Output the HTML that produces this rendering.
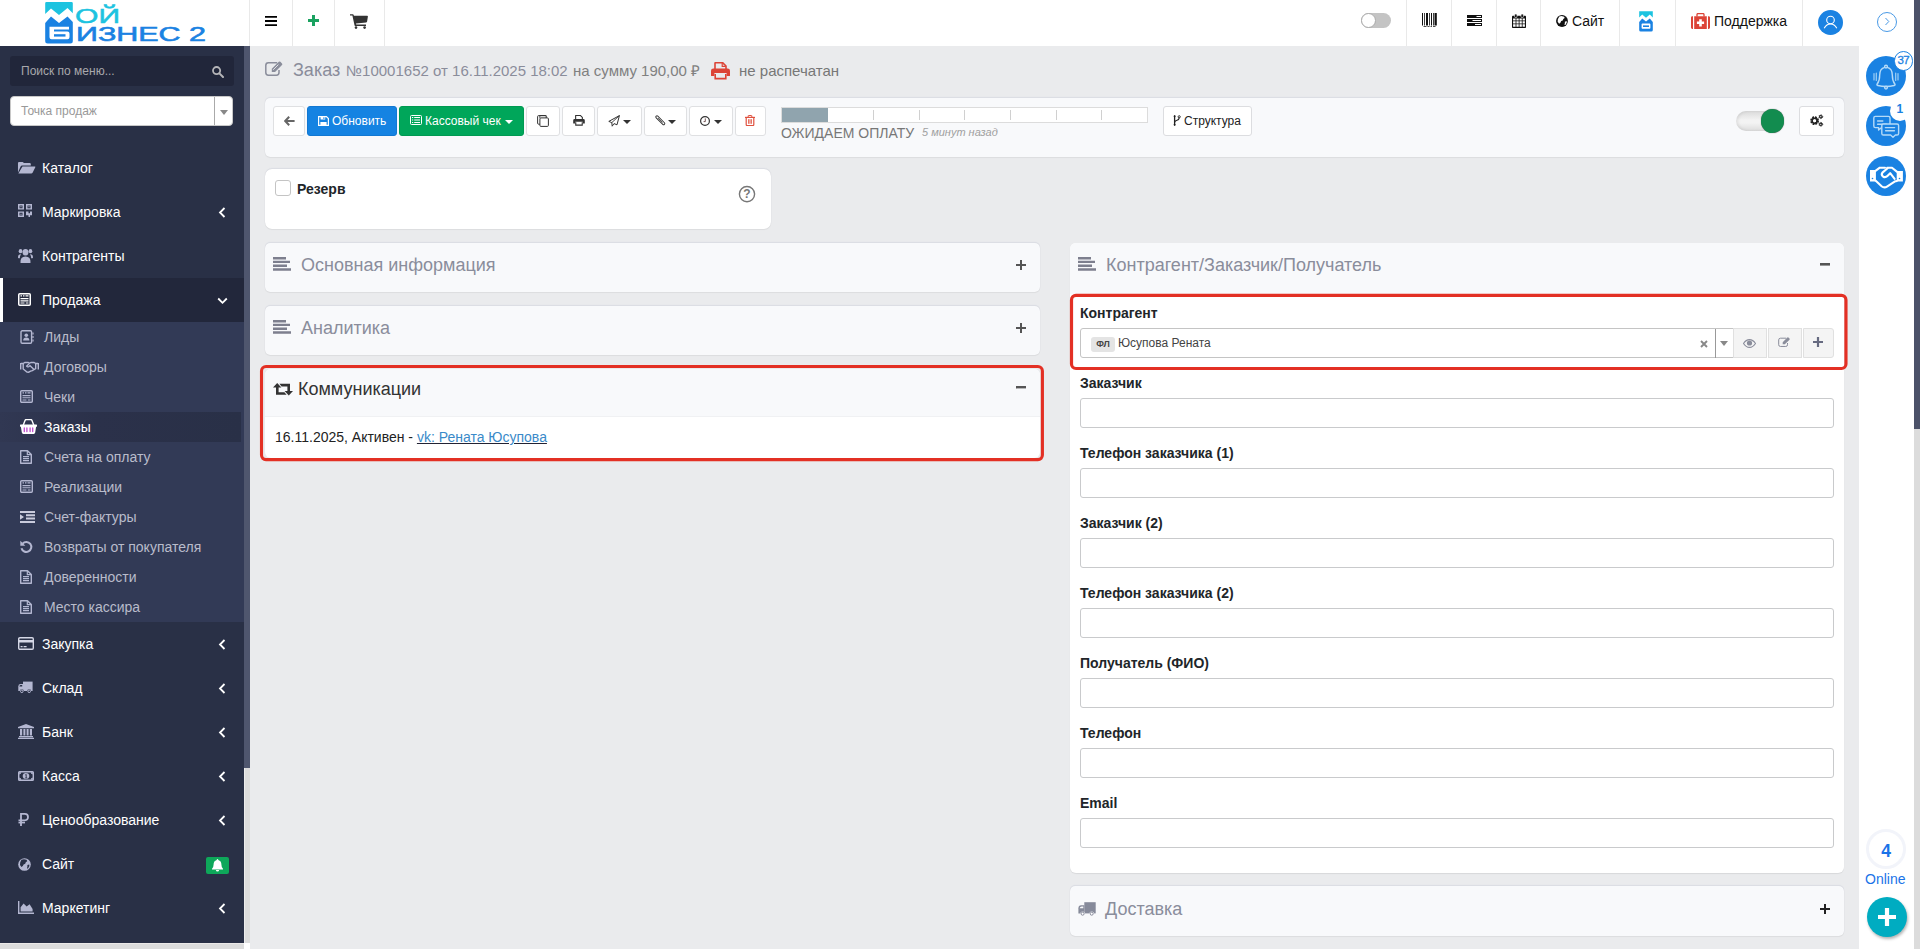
<!DOCTYPE html>
<html lang="ru">
<head>
<meta charset="utf-8">
<title>Заказ №10001652</title>
<style>
*{box-sizing:border-box;margin:0;padding:0}
html,body{width:1920px;height:949px;overflow:hidden}
body{font-family:"Liberation Sans",Arial,sans-serif;font-size:14px;color:#212529;background:#eaebed;position:relative}
.abs{position:absolute}
svg{display:block}
/* ---------- top bar ---------- */
#topbar{position:absolute;left:0;top:0;width:1859px;height:46px;background:#fff}
#topbar .cell{position:absolute;top:0;height:46px;border-left:1px solid #e9e9e9}
#topbar .txt{position:absolute;top:0;line-height:42px;font-size:14px;color:#111;white-space:nowrap}
/* ---------- sidebar ---------- */
#sidebar{position:absolute;left:0;top:46px;width:244px;height:897px;background:#293046;overflow:hidden}
#sbscroll{position:absolute;left:244px;top:46px;width:6px;height:897px;background:#dcdcdc;border-left:1px solid #ececec}
#sbscroll i{position:absolute;left:-1px;top:0;width:6px;height:722px;background:#4f566e}
#hscroll{position:absolute;left:0;top:943px;width:244px;height:6px;background:#dcdcdc;border-top:1px solid #ebe9e8}
#hcorner{position:absolute;left:244px;top:943px;width:6px;height:6px;background:#fff}
.mi{position:absolute;left:0;width:244px;height:44px;color:#fff;font-size:14px;line-height:44px}
.mi span{position:absolute;left:42px;top:0;white-space:nowrap}
.mi svg.ic{position:absolute;left:18px;top:14px}
.mi svg.ch{position:absolute;left:218px;top:17px}
.si{position:absolute;left:0;width:244px;height:30px;color:#b9bccb;font-size:14px;line-height:30px}
.si span{position:absolute;left:44px;top:0;white-space:nowrap}
.si svg{position:absolute;left:20px;top:8px}
/* ---------- cards ---------- */
.card{position:absolute;background:#f8f9fb;border-radius:5px;box-shadow:0 -1px 1px rgba(90,100,150,.09),0 0 1px rgba(0,0,0,.10),0 1px 1px rgba(0,0,0,.05)}
.ptitle{position:absolute;font-size:18px;color:#8a8d9b;white-space:nowrap;line-height:22px}
.btn{position:absolute;top:107px;height:29px;border:1px solid #dcdde0;background:#fff;border-radius:3px}
.lbl{position:absolute;left:1080px;font-weight:bold;font-size:14px;color:#212529;line-height:16px;white-space:nowrap}
.inp{position:absolute;left:1080px;width:754px;height:30px;border:1px solid #c9cacc;border-radius:3px;background:#fff}
/* ---------- right bar ---------- */
#rbar{position:absolute;left:1859px;top:0;width:55px;height:949px;background:#fff}
#vscroll{position:absolute;left:1914px;top:0;width:6px;height:949px;background:#dcdcdc}
#vscroll i{position:absolute;left:0;top:0;width:6px;height:429px;background:#4c5269}
.circ{position:absolute;border-radius:50%;background:#1a82e2}
</style>
</head>
<body>

<!-- ================= TOP BAR ================= -->
<div id="topbar">
<!-- logo -->
<svg class="abs" style="left:40px;top:0" width="175" height="46" viewBox="40 0 175 46">
<path d="M46.500 2H71.500Q72.800 2 72.800 3.300V13.200L67.500 8L59 15L51 8.500L45.200 14V3.300Q45.200 2 46.500 2Z" fill="#1cc3e0"/>
<path d="M45.200 23L51 16.500L59 23L67.500 16.500L72.800 22V41Q72.800 43.500 70.300 43.500H47.700Q45.200 43.500 45.200 41Z" fill="#1a82e2"/>
<path d="M49.500 26.800H69V29.400H54V31.600H67.500Q69.500 31.600 69.500 33.600V37.200Q69.500 39.200 67.500 39.200H51.500Q49.500 39.200 49.500 37.200Z" fill="#fff"/>
<path d="M54 34.200H65.500V36.600H54Z" fill="#1a82e2"/>
<text x="75" y="23" font-family="Liberation Sans,Arial,sans-serif" font-size="21" fill="#1cc3e0" stroke="#1cc3e0" stroke-width=".5" textLength="45" lengthAdjust="spacingAndGlyphs">ОЙ</text>
<text x="76" y="40.500" font-family="Liberation Sans,Arial,sans-serif" font-size="20" fill="#1a82e2" stroke="#1a82e2" stroke-width=".6" textLength="130" lengthAdjust="spacingAndGlyphs">ИЗНЕС 2</text>
</svg>

<div class="cell" style="left:249px;width:43px"></div>
<div class="cell" style="left:292px;width:42px"></div>
<div class="cell" style="left:334px;width:50px"></div>
<div class="cell" style="left:384px;width:1px"></div>
<!-- hamburger -->
<svg class="abs" style="left:265px;top:16px" width="12" height="10" viewBox="0 0 12 10"><path d="M0 0h12v1.800H0zM0 4.100h12v1.800H0zM0 8.200h12V10H0z" fill="#000"/></svg>
<!-- plus -->
<svg class="abs" style="left:308px;top:15px" width="11" height="11" viewBox="0 0 11 11"><path d="M4 0h3v4h4v3H7v4H4V7H0V4h4z" fill="#1aa260"/></svg>
<!-- cart -->
<svg class="abs" style="left:350px;top:14px" width="18" height="15" viewBox="0 0 18 15" fill="#333"><path d="M0 .2h2.800q.7 0 .9.800l.2.800H17.200q.8 0 .7.800l-.8 5q-.1.700-.9.800L6 9.600l.2 1H16v1.300H5.200q-.6 0-.7-.6L2.400 1.500H0Z"/><circle cx="6" cy="13.600" r="1.300"/><circle cx="14.600" cy="13.600" r="1.300"/></svg>

<!-- toggle off -->
<div class="abs" style="left:1361px;top:13px;width:30px;height:15px;border-radius:8px;background:#c4c4c4"></div>
<div class="abs" style="left:1361px;top:13px;width:15px;height:15px;border-radius:50%;background:#fff;border:1px solid #aaa"></div>

<div class="cell" style="left:1406px;width:45px"></div>
<div class="cell" style="left:1451px;width:45px"></div>
<div class="cell" style="left:1496px;width:44px"></div>
<div class="cell" style="left:1540px;width:79px"></div>
<div class="cell" style="left:1619px;width:56px"></div>
<div class="cell" style="left:1675px;width:127px"></div>
<div class="cell" style="left:1802px;width:56px"></div>

<!-- barcode -->
<svg class="abs" style="left:1422px;top:13px" width="15" height="14" viewBox="0 0 15 14" fill="#111"><path d="M0 0h1v12.400H0zM2 0h.8v12.400H2zM4 0h2v12.400H4zM7 0h.8v12.400H7zM9 0h1v12.400H9zM11 0h.800v12.400H11zM12.500 0h2.300v12.400h-2.300zM1.500 13.200h3v.8h-3zM5.500 13.200h2v.8h-2zM8.500 13.200h1.500v.8H8.500zM11 13.200h2.500v.8H11z"/></svg>
<!-- tasks -->
<svg class="abs" style="left:1467px;top:15px" width="15" height="11" viewBox="0 0 15 11"><path d="M0 0h15v3H0zM0 4h15v3H0zM0 8h15v3H0z" fill="#111"/><path d="M9.500 1h4.500v1H9.500zM5.500 5h8.500v1H5.500zM8 9h6v1H8z" fill="#fff"/></svg>
<!-- calendar -->
<svg class="abs" style="left:1512px;top:14px" width="14" height="14" viewBox="0 0 14 14"><path d="M0 2.600Q0 1.800.8 1.800H13.200Q14 1.800 14 2.600V13.200Q14 14 13.200 14H.8Q0 14 0 13.200Z" fill="#111"/><path d="M1.100 4.400h2.500v2h-2.500zM4.400 4.400h2.300v2H4.400zM7.500 4.400h2.300v2H7.500zM10.600 4.400h2.300v2h-2.300zM1.100 7.200h2.500v2.200h-2.500zM4.400 7.200h2.300v2.200H4.400zM7.500 7.200h2.300v2.200H7.500zM10.600 7.200h2.300v2.200h-2.300zM1.100 10.200h2.500v2.600h-2.500zM4.400 10.200h2.300v2.600H4.400zM7.500 10.200h2.300v2.600H7.500zM10.600 10.200h2.300v2.600h-2.300z" fill="#fff"/><rect x="2.600" y="0" width="2.400" height="3.600" rx="1" fill="#111" stroke="#fff" stroke-width=".6"/><rect x="9" y="0" width="2.400" height="3.600" rx="1" fill="#111" stroke="#fff" stroke-width=".6"/></svg>
<!-- globe -->
<svg class="abs" style="left:1556px;top:15px" width="12" height="12" viewBox="0 0 13 13"><circle cx="6.500" cy="6.500" r="6.400" fill="#111"/><path d="M3.600 1.600L6 1l2.800.8.600 1.500-1.500 1-.6 1.700-1.700.6-.8 1.700L3.400 9.400 1.800 7.200l.2-2.600ZM9.600 7.200l1.900-.7.200 1.700-1.500 2.500-1 .2.400-2.100Z" fill="#fff"/></svg>
<div class="txt" style="left:1572px;top:0;line-height:42px">Сайт</div>
<!-- mini logo -->
<svg class="abs" style="left:1639px;top:11px" width="14" height="21" viewBox="0 0 14 21"><path d="M.2.200H13.800V6.600L10.800 3.600L7 6.800L3.200 3.600L.2 6.600Z" fill="#1cc3e0"/><path d="M.2 11L3.200 7.400L7 10.600L10.800 7.400L13.800 11V19Q13.800 20.600 12.200 20.600H1.800Q.2 20.600.2 19Z" fill="#1a82e2"/><rect x="2.600" y="12.600" width="8.800" height="5.200" rx=".8" fill="#fff"/><path d="M4 14.400h6v1.600H4z" fill="#1a82e2"/></svg>
<!-- medkit -->
<svg class="abs" style="left:1691px;top:13px" width="19" height="16" viewBox="0 0 19 16"><path d="M6 3.400V1.600Q6 .6 7 .6h5q1 0 1 1v1.800" fill="none" stroke="#dc4437" stroke-width="1.300"/><path d="M0 4.600Q0 3.200 1.400 3.200H2V16H1.400Q0 16 0 14.600ZM3.200 3.200H15.800V16H3.200ZM17 3.200h.6Q19 3.200 19 4.600V14.600Q19 16 17.600 16H17Z" fill="#dc4437"/><path d="M8.200 6.200h2.600v2.300h2.300v2.600h-2.300v2.300H8.200v-2.300H5.900V8.500h2.300z" fill="#fff"/></svg>
<div class="txt" style="left:1714px;top:0;line-height:42px">Поддержка</div>
<!-- avatar -->
<div class="circ" style="left:1818px;top:10px;width:25px;height:25px"></div>
<svg class="abs" style="left:1823px;top:15px" width="15" height="14" viewBox="0 0 15 14" fill="none" stroke="#fff" stroke-width="1.100"><circle cx="7.500" cy="5" r="3.800"/><path d="M1.200 13.200Q3.500 9 7.500 9Q11.500 9 13.800 13.200"/></svg>

</div>

<!-- ================= SIDEBAR ================= -->
<div id="sidebar">
<div class="abs" style="left:10px;top:10px;width:224px;height:30px;background:#21263a;border-radius:3px"></div>
<div class="abs" style="left:21px;top:10px;line-height:30px;font-size:12px;color:#a8a8ac;white-space:nowrap">Поиск по меню...</div>
<svg class="abs" style="left:212px;top:20px" width="12" height="12" viewBox="0 0 12 12"><circle cx="4.6" cy="4.6" r="3.6" fill="none" stroke="#b5b5b8" stroke-width="1.8"/><path d="M7.4 7.4 L11 11" stroke="#b5b5b8" stroke-width="2" stroke-linecap="round"/></svg>

<div class="abs" style="left:10px;top:50px;width:223px;height:30px;background:#fff;border:1px solid #c8c8c8;border-radius:4px"></div>
<div class="abs" style="left:21px;top:50px;line-height:30px;font-size:12px;color:#999;white-space:nowrap">Точка продаж</div>
<div class="abs" style="left:214px;top:51px;width:1px;height:28px;background:#aaa"></div>
<svg class="abs" style="left:220px;top:64px" width="8" height="5" viewBox="0 0 8 5"><path d="M0 0H8L4 5Z" fill="#888"/></svg>

<!-- main items -->
<div class="mi" style="top:100px"><svg class="ic" style="left:17px;top:14.500px" width="18.500" height="13.500" preserveAspectRatio="none" viewBox="0 0 19 14"><path d="M1 12V2.2Q1 1 2.2 1H5.6Q6.6 1 6.9 2.2H13Q14.2 2.2 14.2 3.4V4.6H5.2Q4.2 4.6 3.7 5.6Z" fill="#b4b7d1"/><path d="M5.6 5.8H18.4Q19.2 5.8 18.8 6.6L16 12.2Q15.6 13 14.6 13H1.4Z" fill="#b4b7d1"/></svg><span>Каталог</span></div>

<div class="mi" style="top:144px"><svg class="ic" style="left:17.500px;top:14px" width="14" height="13" viewBox="0 0 14 14" preserveAspectRatio="none" fill="#b4b7d1"><path d="M0 0h6v6H0zM1.5 1.5v3h3v-3zM8 0h6v6H8zM9.500 1.5v3h3v-3zM0 8h6v6H0zM1.500 9.500v3h3v-3z" fill-rule="evenodd"/><path d="M2.400 2.400h1.200v1.200H2.400zM10.400 2.400h1.200v1.200h-1.200zM2.400 10.400h1.200v1.200H2.400zM8 8h2.500v2H12V8h2v4h-2v2h-1.500v-2H8z"/></svg><span>Маркировка</span><svg class="ch" width="8" height="11" viewBox="0 0 8 11"><path d="M6.500 1L2 5.500L6.500 10" fill="none" stroke="#fff" stroke-width="1.800"/></svg></div>

<div class="mi" style="top:188px"><svg class="ic" style="left:18px" width="15" height="15" viewBox="0 0 17 15" preserveAspectRatio="none" fill="#b4b7d1"><circle cx="8.500" cy="4.200" r="3.300"/><path d="M2.800 14.500Q2.400 8.400 8.500 8.400Q14.600 8.400 14.200 14.500Q14.200 15 13.400 15H3.600Q2.800 15 2.800 14.500Z"/><circle cx="2.900" cy="3.200" r="2.100"/><circle cx="14.100" cy="3.200" r="2.100"/><path d="M0 9.500Q0 5.800 3.400 6.200Q2 8 2.100 10.200H.8Q0 10.200 0 9.500ZM17 9.500Q17 5.800 13.600 6.200Q15 8 14.900 10.200H16.200Q17 10.200 17 9.500Z"/></svg><span>Контрагенты</span></div>

<div class="abs" style="left:0;top:232px;width:244px;height:44px;background:#22273b"></div>
<div class="abs" style="left:0;top:232px;width:3px;height:44px;background:#fff"></div>
<div class="mi" style="top:232px"><svg class="ic" style="left:18px;top:15px" width="13" height="13" viewBox="0 0 13 13"><rect x=".75" y=".75" width="11.500" height="11.500" rx="1" fill="none" stroke="#fff" stroke-width="1.500"/><path d="M2.500 2.200h1.500v1.200h-1.500zM5 2.200h1.500v1.200H5zM7.500 2.200h3v1.200h-3zM2.500 5h8v1.300h-8zM2.500 7.200h8v1.200h-8zM2.500 9.400h4v1.200h-4zM7.800 9.400h2.700v1.200H7.800z" fill="#fff"/></svg><span>Продажа</span><svg class="ch" style="left:217px;top:19px" width="11" height="8" viewBox="0 0 11 8"><path d="M1.200 1.500L5.500 5.800L9.800 1.500" fill="none" stroke="#fff" stroke-width="1.800"/></svg></div>

<!-- submenu -->
<div class="abs" style="left:0;top:276px;width:244px;height:300px;background:#323a56"></div>
<div class="abs" style="left:0;top:366px;width:241px;height:30px;background:linear-gradient(to right,#313853,#2b314a 40%,#293047)"></div>

<div class="si" style="top:276px"><svg width="14" height="14" viewBox="0 0 14 14"><rect x="1" y=".8" width="10.600" height="12.400" rx="1.200" fill="none" stroke="#b4b7d1" stroke-width="1.400"/><circle cx="6.300" cy="5.200" r="1.800" fill="#b4b7d1"/><path d="M3.200 10.600Q3.200 7.600 6.300 7.600Q9.400 7.600 9.400 10.600Z" fill="#b4b7d1"/><path d="M12.400 2.600h1.200v2h-1.200zM12.400 6h1.200v2h-1.200zM12.400 9.400h1.200v2h-1.200z" fill="#b4b7d1"/></svg><span>Лиды</span></div>
<div class="si" style="top:306px"><svg style="top:9px" width="19" height="12" viewBox="0 0 19 12" fill="none" stroke="#b4b7d1"><path d="M1 2.500h2.200l1.600-1h3.400l1.300.8 1.500-.8h3l1.800 1H18" stroke-width="1.400"/><path d="M3.200 3v5l3.800 3 1.600.2 2-1 1.700-.6 3.400-2V3" stroke-width="1.400"/><path d="M9.500 2.400L6.600 5.200q.9 1.300 2.400.3l1-.8 3.800 3.600" stroke-width="1.300"/><path d="M.7 2v6.500M18.300 2v6.500" stroke-width="1.400"/></svg><span>Договоры</span></div>
<div class="si" style="top:336px"><svg width="13" height="13" viewBox="0 0 13 13"><rect x=".7" y=".7" width="11.600" height="11.600" rx="1" fill="none" stroke="#b4b7d1" stroke-width="1.400"/><path d="M2.500 2.300h1.500v1.100h-1.500zM5 2.300h1.500v1.100H5zM7.500 2.300h3v1.100h-3zM2.500 5h8v1.200h-8zM2.500 7.200h8v1.100h-8zM2.500 9.400h4v1.100h-4zM7.800 9.400h2.700v1.100H7.800z" fill="#b4b7d1"/></svg><span>Чеки</span></div>
<div class="si" style="top:366px;color:#fff"><svg style="top:7px" width="17" height="15" viewBox="0 0 17 15"><path d="M.6 5.600h15.800q.6 0 .6.700v.9q0 .6-.6.600h-.3l-.9 5.800q-.2 1.400-1.500 1.400H3.300q-1.300 0-1.500-1.400L.9 7.800H.6q-.6 0-.6-.6v-.9q0-.7.6-.7Z" fill="#fff"/><path d="M3.200 6.200L5 1.500q.4-1 1.400-1h4.200q1 0 1.400 1l1.800 4.700" fill="none" stroke="#fff" stroke-width="1.400"/><path d="M4.300 9v3.600M6.900 9v3.600M10.100 9v3.600M12.700 9v3.600" stroke="#c04ad0" stroke-width="1.300" stroke-linecap="round"/></svg><span>Заказы</span></div>
<div class="si" style="top:396px"><svg class="doc" width="12" height="14" viewBox="0 0 12 14"><path d="M.7.700h6.800l3.800 3.800v8.800H.7Z" fill="none" stroke="#b4b7d1" stroke-width="1.400" stroke-linejoin="round"/><path d="M7.300.9v3.800h3.800" fill="none" stroke="#b4b7d1" stroke-width="1.200"/><path d="M3 6.600h6M3 8.600h6M3 10.600h6" stroke="#b4b7d1" stroke-width="1.100"/></svg><span>Счета на оплату</span></div>
<div class="si" style="top:426px"><svg width="13" height="13" viewBox="0 0 13 13"><rect x=".7" y=".7" width="11.600" height="11.600" rx="1" fill="none" stroke="#b4b7d1" stroke-width="1.400"/><path d="M2.500 2.300h1.500v1.100h-1.500zM5 2.300h1.500v1.100H5zM7.500 2.300h3v1.100h-3zM2.500 5h8v1.200h-8zM2.500 7.200h8v1.100h-8zM2.500 9.400h4v1.100h-4zM7.800 9.400h2.700v1.100H7.800z" fill="#b4b7d1"/></svg><span>Реализации</span></div>
<div class="si" style="top:456px"><svg style="top:9px" width="15" height="12" viewBox="0 0 15 12" fill="#c9cbdc"><path d="M0 0h15v2H0zM6 3.300h9v2H6zM6 6.600h9v2H6zM0 10h15v2H0zM0 3.200l4 2.800l-4 2.800z"/></svg><span>Счет-фактуры</span></div>
<div class="si" style="top:486px"><svg style="top:8px" width="13" height="14" viewBox="0 0 13 14"><path d="M2.600 3.600A5 5 0 1 1 1.500 8.200" fill="none" stroke="#b4b7d1" stroke-width="2"/><path d="M.3.800v5h5Z" fill="#b4b7d1"/></svg><span>Возвраты от покупателя</span></div>
<div class="si" style="top:516px"><svg width="12" height="14" viewBox="0 0 12 14"><path d="M.7.700h6.800l3.800 3.800v8.800H.7Z" fill="none" stroke="#b4b7d1" stroke-width="1.400" stroke-linejoin="round"/><path d="M7.300.9v3.800h3.800" fill="none" stroke="#b4b7d1" stroke-width="1.200"/><path d="M3 6.600h6M3 8.600h6M3 10.600h6" stroke="#b4b7d1" stroke-width="1.100"/></svg><span>Доверенности</span></div>
<div class="si" style="top:546px"><svg width="12" height="14" viewBox="0 0 12 14"><path d="M.7.700h6.800l3.800 3.800v8.800H.7Z" fill="none" stroke="#b4b7d1" stroke-width="1.400" stroke-linejoin="round"/><path d="M7.300.9v3.800h3.800" fill="none" stroke="#b4b7d1" stroke-width="1.200"/><path d="M3 6.600h6M3 8.600h6M3 10.600h6" stroke="#b4b7d1" stroke-width="1.100"/></svg><span>Место кассира</span></div>

<!-- lower main items -->
<div class="mi" style="top:576px"><svg class="ic" style="top:15px" width="16" height="13" viewBox="0 0 16 13"><rect x=".7" y=".7" width="14.600" height="11.600" rx="1.200" fill="none" stroke="#d5d7e6" stroke-width="1.400"/><path d="M.7 3h14.600v2.600H.7zM2.600 9h2v1.200h-2zM5.600 9h3v1.200h-3z" fill="#d5d7e6"/></svg><span>Закупка</span><svg class="ch" width="8" height="11" viewBox="0 0 8 11"><path d="M6.500 1L2 5.500L6.500 10" fill="none" stroke="#fff" stroke-width="1.800"/></svg></div>

<div class="mi" style="top:620px"><svg class="ic" style="left:18px;top:15px" width="15" height="13" viewBox="0 0 15 13"><path d="M5 .6H14.600V10H5Z" fill="#b4b7d1"/><path d="M.3 10V5.400Q.3 3 2.600 3H5V10Z" fill="#b4b7d1"/><path d="M1.400 5.400Q1.600 4 2.900 4H4.200V5.400Z" fill="#293046"/><circle cx="3.800" cy="10.300" r="2.100" fill="#293046"/><circle cx="11.200" cy="10.300" r="2.100" fill="#293046"/><circle cx="3.800" cy="10.300" r="1.300" fill="#293046" stroke="#b4b7d1" stroke-width="1"/><circle cx="11.200" cy="10.300" r="1.300" fill="#293046" stroke="#b4b7d1" stroke-width="1"/></svg><span>Склад</span><svg class="ch" width="8" height="11" viewBox="0 0 8 11"><path d="M6.500 1L2 5.500L6.500 10" fill="none" stroke="#fff" stroke-width="1.800"/></svg></div>

<div class="mi" style="top:664px"><svg class="ic" style="top:14px" width="16" height="15" viewBox="0 0 16 15" fill="#b4b7d1"><path d="M8 0L16 3v1.200H0V3ZM1 12h14v1.200H1zM0 13.800h16V15H0zM2 5h2.200v6.400H2zM5.400 5h2v6.400h-2zM8.600 5h2v6.400h-2zM11.800 5H14v6.400h-2.200z"/></svg><span>Банк</span><svg class="ch" width="8" height="11" viewBox="0 0 8 11"><path d="M6.500 1L2 5.500L6.500 10" fill="none" stroke="#fff" stroke-width="1.800"/></svg></div>

<div class="mi" style="top:708px"><svg class="ic" style="top:17px" width="16" height="10" viewBox="0 0 16 10"><rect x=".7" y=".7" width="14.600" height="8.600" rx=".8" fill="none" stroke="#b4b7d1" stroke-width="1.400"/><ellipse cx="8" cy="5" rx="3.300" ry="2.900" fill="#b4b7d1"/><path d="M1.200 1.200h2.200Q3.200 3.200 1.200 3.400ZM14.800 1.200h-2.200Q12.800 3.200 14.800 3.400ZM1.200 8.800h2.200Q3.200 6.800 1.200 6.600ZM14.800 8.800h-2.200Q12.800 6.800 14.800 6.600Z" fill="#b4b7d1"/><path d="M7.300 4l.9-.7V6.800M7.200 6.900h2" stroke="#293046" stroke-width=".9" fill="none"/></svg><span>Касса</span><svg class="ch" width="8" height="11" viewBox="0 0 8 11"><path d="M6.500 1L2 5.500L6.500 10" fill="none" stroke="#fff" stroke-width="1.800"/></svg></div>

<div class="mi" style="top:752px"><svg class="ic" style="top:15px" width="11" height="13" viewBox="0 0 11 13"><path d="M3 13V.9h3.800Q10 .9 10 4.100Q10 7.300 6.800 7.300H.5" fill="none" stroke="#b4b7d1" stroke-width="1.800"/><path d="M.5 9.600h6.500" stroke="#b4b7d1" stroke-width="1.600"/></svg><span>Ценообразование</span><svg class="ch" width="8" height="11" viewBox="0 0 8 11"><path d="M6.500 1L2 5.500L6.500 10" fill="none" stroke="#fff" stroke-width="1.800"/></svg></div>

<div class="mi" style="top:796px"><svg class="ic" style="top:16px" width="13" height="13" viewBox="0 0 13 13"><circle cx="6.500" cy="6.500" r="6.300" fill="#b4b7d1"/><path d="M3.400 1.800L6 1.200l2.600.6.600 1.400-1.400 1-.6 1.600-1.600.6-.8 1.600L3.400 9 2 7l.2-2.400ZM9.400 7l1.800-.6.200 1.600-1.400 2.400-1 .2.400-2Z" fill="#293046"/></svg><span>Сайт</span></div>
<div class="abs" style="left:206px;top:811px;width:23px;height:17px;background:#0ea75a;border-radius:2px"></div>
<svg class="abs" style="left:212px;top:813px" width="11" height="13" viewBox="0 0 11 13" fill="#fff"><path d="M5.500 0q.8 0 .8.900Q9.400 1.800 9.400 5.600Q9.400 8.400 11 9.800V10.400H0V9.800Q1.600 8.400 1.600 5.600Q1.600 1.800 4.700.9Q4.700 0 5.500 0ZM3.900 11h3.200q0 1.600-1.600 1.600T3.900 11Z"/></svg>

<div class="mi" style="top:840px"><svg class="ic" style="top:15px" width="16" height="13" viewBox="0 0 16 13" fill="#b4b7d1"><path d="M0 0h1.400v11.600H16V13H0ZM2.600 10.400V6.200L5.600 2.400L8.600 5.400L11.600 3.200L14.600 8v2.400Z"/></svg><span>Маркетинг</span><svg class="ch" width="8" height="11" viewBox="0 0 8 11"><path d="M6.500 1L2 5.500L6.500 10" fill="none" stroke="#fff" stroke-width="1.800"/></svg></div>

</div>
<div id="sbscroll"><i></i></div>
<div id="hscroll"></div><div id="hcorner"></div>

<!-- ================= MAIN ================= -->
<div id="main">
<!-- title -->
<svg class="abs" style="left:265px;top:61px" width="19" height="15" viewBox="0 0 19 15" fill="none" stroke="#8a8d9b"><path d="M12.200 1.800H3.400Q.8 1.800.8 4.400V11.600Q.8 14.200 3.400 14.200H11.400Q14 14.200 14 11.600V9" stroke-width="1.500"/><path d="M6.800 7.800L13.800 .8Q14.600 0 15.400 .8L17 2.400Q17.800 3.200 17 4L10 11H6.800Z" fill="#8a8d9b" stroke="none"/><path d="M8.200 8.800L13.400 3.600" stroke="#eaebed" stroke-width=".9"/></svg>
<div class="abs" id="t1" style="left:293px;top:58px;font-size:18px;line-height:24px;color:#8a8d9b;white-space:nowrap">Заказ</div>
<div class="abs" id="t2" style="left:346px;top:61px;font-size:15px;line-height:20px;color:#8a8d9b;white-space:nowrap">№10001652 от 16.11.2025 18:02</div>
<div class="abs" id="t3" style="left:573px;top:61px;font-size:15px;line-height:20px;color:#808080;white-space:nowrap">на сумму 190,00 ₽</div>
<svg class="abs" style="left:711px;top:62px" width="19" height="18" viewBox="0 0 19 18"><path d="M4 7V1.200Q4 .6 4.600 .6H11.600L15 4V7" fill="none" stroke="#dc4437" stroke-width="1.600"/><path d="M11.200 .8V4.400H14.800" fill="none" stroke="#dc4437" stroke-width="1.200"/><path d="M2.400 6.400H16.600Q19 6.400 19 8.800V13.400Q19 14 18.400 14H15.600V11H3.400V14H.6Q0 14 0 13.400V8.800Q0 6.400 2.400 6.400Z" fill="#dc4437"/><path d="M4.200 12V16.600H14.800V12" fill="none" stroke="#dc4437" stroke-width="1.600"/></svg>
<div class="abs" id="t4" style="left:739px;top:61px;font-size:15px;line-height:20px;color:#777;white-space:nowrap">не распечатан</div>

<!-- toolbar card -->
<div class="card" style="left:265px;top:98px;width:1579px;height:59px"></div>
<div class="btn" style="left:273px;top:106px;width:32px;height:30px;border-color:#dfe0e2"></div>
<svg class="abs" style="left:284px;top:116px" width="11" height="10" viewBox="0 0 11 10"><path d="M5.200 .8L1.200 5L5.200 9.200M1.400 5H10.600" fill="none" stroke="#666" stroke-width="2" stroke-linejoin="miter"/></svg>

<div class="btn" style="left:307px;top:106px;width:90px;height:30px;background:#1583e2;border-color:#1278d2"></div>
<svg class="abs" style="left:318px;top:116px" width="11" height="10" viewBox="0 0 11 10"><path d="M.6 .6H8.400L10.400 2.600V9.400H.6Z" fill="none" stroke="#fff" stroke-width="1.200"/><path d="M2.600 .8h4.600v2.800H2.600zM2.400 6h6.200v3.200H2.400z" fill="#fff"/><path d="M5.400 1.200h1v1.800h-1z" fill="#1583e2"/></svg>
<div class="abs" id="b1" style="left:332px;top:106px;line-height:30px;font-size:12px;color:#fff;white-space:nowrap">Обновить</div>

<div class="btn" style="left:399px;top:106px;width:125px;height:30px;background:#00a65a;border-color:#009a52"></div>
<svg class="abs" style="left:410px;top:115px" width="12" height="10" viewBox="0 0 12 10"><rect x=".5" y=".5" width="11" height="9" rx="1" fill="none" stroke="#fff" stroke-width="1"/><path d="M2 2h1.200v1H2zM4.200 2h5.800v1H4.200zM2 4.500h1.200v1H2zM4.200 4.500h5.800v1H4.200zM2 7h1.200v1H2zM4.200 7h5.800v1H4.200z" fill="#fff"/></svg>
<div class="abs" id="b2" style="left:425px;top:106px;line-height:30px;font-size:12px;color:#fff;white-space:nowrap">Кассовый чек</div>
<svg class="abs" style="left:505px;top:120px" width="8" height="4" viewBox="0 0 8 4"><path d="M0 0H8L4 4Z" fill="#fff"/></svg>

<div class="btn" style="left:526px;top:106px;width:34px;height:30px;border-color:#dfe0e2"></div>
<svg class="abs" style="left:537px;top:115px" width="12" height="12" viewBox="0 0 12 12"><path d="M2.800 2.800V1.400Q2.800 .6 3.600 .6H8.800Q9.600 .6 9.600 1.400" fill="none" stroke="#333" stroke-width="1"/><path d="M.6 1.400Q.6 .6 1.400 .6H8.200Q9 .6 9 1.400" fill="none" stroke="none"/><rect x=".6" y=".6" width="8.600" height="8.600" rx="1" fill="none" stroke="#333" stroke-width="1"/><rect x="2.900" y="2.900" width="8.500" height="8.500" rx="1" fill="#fff" stroke="#333" stroke-width="1"/></svg>

<div class="btn" style="left:562px;top:106px;width:33px;height:30px;border-color:#dfe0e2"></div>
<svg class="abs" style="left:573px;top:115px" width="12" height="11" viewBox="0 0 19 18"><path d="M4 7V1.200Q4 .6 4.600 .6H11.600L15 4V7" fill="none" stroke="#333" stroke-width="1.800"/><path d="M2.400 6.400H16.600Q19 6.400 19 8.800V13.400Q19 14 18.400 14H15.600V11H3.400V14H.6Q0 14 0 13.400V8.800Q0 6.400 2.400 6.400Z" fill="#333"/><path d="M4.200 12V16.600H14.800V12" fill="none" stroke="#333" stroke-width="1.800"/></svg>

<div class="btn" style="left:597px;top:106px;width:45px;height:30px;border-color:#dfe0e2"></div>
<svg class="abs" style="left:608px;top:115px" width="12" height="12" viewBox="0 0 12 12"><path d="M11.400 .6L.8 6.400L3.800 7.600L4.200 11.200L6 8.600L9 9.800Z" fill="none" stroke="#333" stroke-width="1" stroke-linejoin="round"/><path d="M11.400 .6L3.800 7.600" stroke="#333" stroke-width=".9"/></svg>
<svg class="abs" style="left:623px;top:120px" width="8" height="4" viewBox="0 0 8 4"><path d="M0 0H8L4 4Z" fill="#333"/></svg>

<div class="btn" style="left:644px;top:106px;width:43px;height:30px;border-color:#dfe0e2"></div>
<svg class="abs" style="left:655px;top:115px" width="11" height="11" viewBox="0 0 11 11" fill="none" stroke-linecap="round"><path d="M2 2L8.600 8.600" stroke="#333" stroke-width="3.200"/><path d="M2 2L8.600 8.600" stroke="#fff" stroke-width="1.400"/><path d="M3.400 3.400L7.200 7.200" stroke="#333" stroke-width=".8"/></svg>
<svg class="abs" style="left:668px;top:120px" width="8" height="4" viewBox="0 0 8 4"><path d="M0 0H8L4 4Z" fill="#333"/></svg>

<div class="btn" style="left:689px;top:106px;width:44px;height:30px;border-color:#dfe0e2"></div>
<svg class="abs" style="left:700px;top:116px" width="10" height="10" viewBox="0 0 10 10"><circle cx="5" cy="5" r="4.400" fill="none" stroke="#333" stroke-width="1.200"/><path d="M5.300 2.400V5.600H3.600" fill="none" stroke="#644" stroke-width=".9"/></svg>
<svg class="abs" style="left:714px;top:120px" width="8" height="4" viewBox="0 0 8 4"><path d="M0 0H8L4 4Z" fill="#333"/></svg>

<div class="btn" style="left:735px;top:106px;width:31px;height:30px;border-color:#dfe0e2"></div>
<svg class="abs" style="left:745px;top:115px" width="10" height="11" viewBox="0 0 10 11" fill="none" stroke="#e0513f"><path d="M0 2.400H10" stroke-width="1.200"/><path d="M3.200 2.200V.8Q3.200 .5 3.600 .5H6.400Q6.800 .5 6.800 .8V2.200" stroke-width="1"/><path d="M1.200 2.600V9.600Q1.200 10.500 2 10.500H8Q8.800 10.500 8.800 9.600V2.600" stroke-width="1.200"/><path d="M3.600 4.200V8.800M5 4.200V8.800M6.400 4.200V8.800" stroke-width=".9"/></svg>

<!-- progress -->
<div class="abs" style="left:781px;top:107px;width:367px;height:16px;background:#fff;border:1px solid #dcdcdc"></div>
<div class="abs" style="left:782px;top:108px;width:46px;height:14px;background:#90a4ae"></div>
<div class="abs" style="left:873px;top:110px;width:1px;height:10px;background:#d0d0d0"></div>
<div class="abs" style="left:919px;top:110px;width:1px;height:10px;background:#d0d0d0"></div>
<div class="abs" style="left:964px;top:110px;width:1px;height:10px;background:#d0d0d0"></div>
<div class="abs" style="left:1010px;top:110px;width:1px;height:10px;background:#d0d0d0"></div>
<div class="abs" style="left:1056px;top:110px;width:1px;height:10px;background:#d0d0d0"></div>
<div class="abs" style="left:1101px;top:110px;width:1px;height:10px;background:#d0d0d0"></div>
<div class="abs" id="p1" style="left:781px;top:124px;font-size:14px;line-height:18px;color:#777;white-space:nowrap">ОЖИДАЕМ ОПЛАТУ</div>
<div class="abs" id="p2" style="left:922px;top:124px;font-size:11px;line-height:16px;color:#a0a0a0;font-style:italic;white-space:nowrap">5 минут назад</div>

<!-- structure btn -->
<div class="btn" style="left:1163px;top:106px;width:89px;height:30px;border-color:#dcdde0"></div>
<svg class="abs" style="left:1173px;top:115px" width="8" height="11" viewBox="0 0 8 11" fill="none" stroke="#222"><path d="M1.600 .6V10.400" stroke-width="1.300"/><path d="M1.600 7.400Q1.600 5.800 4 5.200Q6.200 4.600 6.200 2.400" stroke-width="1.100"/><circle cx="6.200" cy="1.800" r="1.100" stroke-width=".9"/><circle cx="1.600" cy="1.200" r=".7" fill="#222" stroke-width=".6"/><circle cx="1.600" cy="9.800" r=".7" fill="#222" stroke-width=".6"/></svg>
<div class="abs" id="b3" style="left:1184px;top:106px;line-height:30px;font-size:12px;color:#222;white-space:nowrap">Структура</div>

<!-- toggle on -->
<div class="abs" style="left:1736px;top:111px;width:46px;height:20px;border-radius:10px;background:linear-gradient(#dadada,#f3f3f3 45%,#f3f3f3 60%,#dcdcdc);box-shadow:inset 2px 0 3px rgba(0,0,0,.08)"></div>
<div class="abs" style="left:1760.500px;top:109.200px;width:23.500px;height:23.500px;border-radius:50%;background:#128c4f;box-shadow:0 0 1px #555"></div>
<div class="btn" style="left:1799px;top:106px;width:35px;height:30px;border-color:#dcdde0"></div>
<svg class="abs" style="left:1809px;top:114px" width="15" height="13" viewBox="0 0 15 13"><circle cx="5.600" cy="6.700" r="3.100" fill="none" stroke="#222" stroke-width="2.600" stroke-dasharray="1.620 .810"/><circle cx="5.600" cy="6.700" r="2.500" fill="none" stroke="#222" stroke-width="1.600"/><circle cx="11.800" cy="2.700" r="1.200" fill="none" stroke="#222" stroke-width="1.100" /><circle cx="11.800" cy="2.700" r="1.900" fill="none" stroke="#222" stroke-width="1" stroke-dasharray=".99 .99"/><circle cx="11.800" cy="10.300" r="1.200" fill="none" stroke="#222" stroke-width="1.100"/><circle cx="11.800" cy="10.300" r="1.900" fill="none" stroke="#222" stroke-width="1" stroke-dasharray=".99 .99"/></svg>

<!-- reserve card -->
<div class="card" style="left:265px;top:169px;width:506px;height:60px;background:#fff;border-radius:7px"></div>
<div class="abs" style="left:275px;top:180px;width:16px;height:16px;border:1px solid #c4c4c4;border-radius:3px;background:#fff"></div>
<div class="abs" id="r1" style="left:297px;top:180px;line-height:18px;font-size:14px;font-weight:bold;color:#212529;white-space:nowrap">Резерв</div>
<svg class="abs" style="left:737.500px;top:185px" width="18" height="18" viewBox="0 0 18 18"><circle cx="9" cy="9.100" r="7.600" fill="none" stroke="#777" stroke-width="1.400"/><text x="9" y="13.300" text-anchor="middle" font-family="Liberation Sans,Arial,sans-serif" font-size="12" font-weight="bold" fill="#777">?</text></svg>

<!-- ===== left column panels ===== -->
<div class="card" style="left:265px;top:243px;width:775px;height:49px"></div>
<svg class="abs" style="left:273px;top:257px" width="18" height="14" viewBox="0 0 18 14" fill="#7d7f8e"><path d="M0 0h13v2.500H0zM0 3.700h17v2.400H0zM0 7.400h14v2.500H0zM0 11.150h18v2.650H0z"/></svg>
<div class="ptitle" id="h1" style="left:301px;top:254px">Основная информация</div>
<svg class="abs" style="left:1016px;top:260px" width="10" height="10" viewBox="0 0 10 10"><path d="M4 0h2v4h4v2H6v4H4V6H0V4h4z" fill="#555"/></svg>

<div class="card" style="left:265px;top:306px;width:775px;height:49px"></div>
<svg class="abs" style="left:273px;top:320px" width="18" height="14" viewBox="0 0 18 14" fill="#7d7f8e"><path d="M0 0h13v2.500H0zM0 3.700h17v2.400H0zM0 7.400h14v2.500H0zM0 11.150h18v2.650H0z"/></svg>
<div class="ptitle" id="h2" style="left:301px;top:317px">Аналитика</div>
<svg class="abs" style="left:1016px;top:323px" width="10" height="10" viewBox="0 0 10 10"><path d="M4 0h2v4h4v2H6v4H4V6H0V4h4z" fill="#555"/></svg>

<!-- communications -->
<div class="abs" style="left:265px;top:369px;width:775px;height:89px;background:#fff;border-radius:6px"></div>
<div class="abs" style="left:265px;top:369px;width:775px;height:48px;background:#f8f9fb;border-radius:6px 6px 0 0;border-bottom:1px solid #f0f1f3"></div>
<svg class="abs" style="left:255px;top:360px" width="795" height="106" viewBox="255 360 795 106"><rect x="261.500" y="366.500" width="780.900" height="93.100" rx="4.500" fill="none" stroke="#e33024" stroke-width="3.100"/></svg>
<svg class="abs" style="left:273px;top:383px" width="20" height="13" viewBox="0 0 20 13" fill="#333"><path d="M4.200 0L8.400 4.600H5.600V9.200H11.400L13.600 11.800H3V4.600H0ZM15.800 12.600L11.600 8H14.400V3.400H8.600L6.400 .8H17V8H20Z"/></svg>
<div class="ptitle" id="h3" style="left:298px;top:378px;color:#333">Коммуникации</div>
<svg class="abs" style="left:1016px;top:386px" width="10" height="3" viewBox="0 0 10 3"><path d="M0 0h10v2.400H0z" fill="#555"/></svg>
<div class="abs" id="c1" style="left:275px;top:428px;font-size:14px;line-height:18px;color:#222;white-space:nowrap">16.11.2025, Активен - <span style="color:#3a8ac9;text-decoration:underline;text-decoration-color:#223">vk: Рената Юсупова</span></div>

<!-- ===== right column ===== -->
<div class="abs" style="left:1070px;top:243px;width:774px;height:630px;background:#fff;border-radius:6px;box-shadow:0 1px 1px rgba(0,0,0,.08)"></div>
<div class="abs" style="left:1070px;top:243px;width:774px;height:51px;background:#f8f9fb;border-radius:6px 6px 0 0"></div>
<svg class="abs" style="left:1078px;top:257px" width="18" height="14" viewBox="0 0 18 14" fill="#7d7f8e"><path d="M0 0h13v2.500H0zM0 3.700h17v2.400H0zM0 7.400h14v2.500H0zM0 11.150h18v2.650H0z"/></svg>
<div class="ptitle" id="h4" style="left:1106px;top:254px">Контрагент/Заказчик/Получатель</div>
<svg class="abs" style="left:1820px;top:263px" width="10" height="3" viewBox="0 0 10 3"><path d="M0 0h10v2.600H0z" fill="#555"/></svg>

<svg class="abs" style="left:1065px;top:290px" width="790" height="85" viewBox="1065 290 790 85"><rect x="1071.500" y="295.400" width="774.450" height="73.100" rx="4.500" fill="none" stroke="#e33024" stroke-width="3.200"/></svg>

<div class="lbl" id="l1" style="top:305px">Контрагент</div>
<div class="inp" style="top:328px;width:654px;border-radius:3px 0 0 3px;border-color:#c4c4c4"></div>
<div class="abs" style="left:1091px;top:337px;width:24px;height:15px;background:#e4e4e4;border-radius:3px;font-size:9px;font-weight:bold;line-height:15px;text-align:center;color:#444">ФЛ</div>
<div class="abs" id="n1" style="left:1118px;top:328px;line-height:30px;font-size:12px;color:#444;white-space:nowrap">Юсупова Рената</div>
<svg class="abs" style="left:1700px;top:340px" width="8" height="8" viewBox="0 0 8 8"><path d="M1 1L7 7M7 1L1 7" stroke="#888" stroke-width="1.900"/></svg>
<div class="abs" style="left:1715px;top:329px;width:1px;height:29px;background:#999"></div>
<svg class="abs" style="left:1720px;top:341px" width="8" height="5" viewBox="0 0 8 5"><path d="M0 0H8L4 5Z" fill="#888"/></svg>
<div class="abs" style="left:1733px;top:328px;width:34px;height:30px;background:#f4f4f4;border:1px solid #e0e0e0"></div>
<div class="abs" style="left:1768px;top:328px;width:34px;height:30px;background:#f4f4f4;border:1px solid #e0e0e0"></div>
<div class="abs" style="left:1803px;top:328px;width:31px;height:30px;background:#f4f4f4;border:1px solid #e0e0e0;border-radius:0 3px 3px 0"></div>
<svg class="abs" style="left:1743px;top:339px" width="13" height="9" viewBox="0 0 13 9"><path d="M.5 4.500Q3 .6 6.500 .6Q10 .6 12.500 4.500Q10 8.400 6.500 8.400Q3 8.400 .5 4.500Z" fill="none" stroke="#8a8d9b" stroke-width="1.100"/><circle cx="6.500" cy="4" r="2.600" fill="#8a8d9b"/></svg>
<svg class="abs" style="left:1778px;top:337px" width="13" height="10" viewBox="0 0 19 15" fill="none" stroke="#8a8d9b"><path d="M12.200 1.800H3.400Q.8 1.800.8 4.400V11.600Q.8 14.200 3.400 14.200H11.400Q14 14.200 14 11.600V9" stroke-width="1.500"/><path d="M6.800 7.800L13.800 .8Q14.600 0 15.400 .8L17 2.400Q17.800 3.200 17 4L10 11H6.800Z" fill="#8a8d9b" stroke="none"/></svg>
<svg class="abs" style="left:1813px;top:337px" width="10" height="10" viewBox="0 0 10 10"><path d="M3.900 0h2.200v3.900H10v2.200H6.100V10H3.900V6.100H0V3.900h3.900z" fill="#666a80"/></svg>

<div class="lbl" id="l2" style="top:375px">Заказчик</div><div class="inp" style="top:398px"></div>
<div class="lbl" style="top:445px">Телефон заказчика (1)</div><div class="inp" style="top:468px"></div>
<div class="lbl" style="top:515px">Заказчик (2)</div><div class="inp" style="top:538px"></div>
<div class="lbl" style="top:585px">Телефон заказчика (2)</div><div class="inp" style="top:608px"></div>
<div class="lbl" style="top:655px">Получатель (ФИО)</div><div class="inp" style="top:678px"></div>
<div class="lbl" style="top:725px">Телефон</div><div class="inp" style="top:748px"></div>
<div class="lbl" id="l8" style="top:795px">Email</div><div class="inp" style="top:818px"></div>

<!-- delivery -->
<div class="card" style="left:1070px;top:886px;width:774px;height:50px"></div>
<svg class="abs" style="left:1078px;top:902px" width="18" height="14" viewBox="0 0 18 14"><path d="M6.300 .2H17.700V11.400H6.300Z" fill="#868a9a"/><path d="M.4 11.400V6.200Q.4 3.200 3.200 3.200H6.300V11.400Z" fill="#868a9a"/><path d="M1.700 6.200Q2 4.400 3.600 4.400H5.300V6.200Z" fill="#f8f9fb"/><circle cx="4.600" cy="11.700" r="2.300" fill="#f8f9fb"/><circle cx="13.700" cy="11.700" r="2.300" fill="#f8f9fb"/><circle cx="4.600" cy="11.700" r="1.500" fill="#fff" stroke="#868a9a" stroke-width="1"/><circle cx="13.700" cy="11.700" r="1.500" fill="#fff" stroke="#868a9a" stroke-width="1"/></svg>
<div class="ptitle" id="h5" style="left:1105px;top:898px">Доставка</div>
<svg class="abs" style="left:1820px;top:904px" width="10" height="10" viewBox="0 0 10 10"><path d="M4 0h2v4h4v2H6v4H4V6H0V4h4z" fill="#222"/></svg>

</div>

<!-- ================= RIGHT BAR ================= -->
<div id="rbar">
<!-- collapse arrow -->
<div class="abs" style="left:18px;top:11.500px;width:20px;height:20px;border-radius:50%;border:1px solid #4a9ae6"></div>
<svg class="abs" style="left:25px;top:17px" width="6" height="9" viewBox="0 0 6 9"><path d="M1.500 1L4.800 4.500L1.500 8" fill="none" stroke="#4a9ae6" stroke-width="1"/></svg>

<!-- bell -->
<div class="circ" style="left:7px;top:56px;width:40px;height:40px"></div>
<svg class="abs" style="left:7px;top:56px" width="40" height="40" viewBox="1866 56 40 40" fill="none" stroke="#b4daf8" stroke-width="1.400" stroke-linecap="round" stroke-linejoin="round"><path d="M1884.700 67.400Q1879.700 68.800 1879.700 75Q1879.700 80.800 1877.200 84Q1876.400 85.200 1877.800 85.500Q1886 87.400 1894.200 85.500Q1895.600 85.200 1894.800 84Q1892.300 80.800 1892.300 75Q1892.300 68.800 1887.300 67.400"/><circle cx="1886" cy="66.600" r="1.400"/><circle cx="1886" cy="87.600" r="1.400"/><path d="M1874 73.500V80M1876.300 73V80.500M1895.700 73V80.500M1898 73.500V80" stroke-width="1.200" stroke="#9fd0f6"/></svg>
<div class="abs" id="b37" style="left:34.600px;top:51px;width:19.500px;height:19.500px;border-radius:50%;background:#fff;border:1px solid #1a82e2;color:#1a82e2;font-size:11.500px;line-height:17.500px;text-align:center;letter-spacing:-.5px;-webkit-text-stroke:.3px #1a82e2">37</div>

<!-- chat -->
<div class="circ" style="left:7px;top:106px;width:40px;height:40px"></div>
<svg class="abs" style="left:7px;top:106px" width="40" height="40" viewBox="1866 106 40 40" fill="#1a82e2" stroke="#b4daf8" stroke-width="1.400" stroke-linejoin="round" stroke-linecap="round"><path d="M1875.400 116.400H1888.400Q1890 116.400 1890 118V126Q1890 127.600 1888.400 127.600H1881.600L1878.600 130V127.600H1875.400Q1873.800 127.600 1873.800 126V118Q1873.800 116.400 1875.400 116.400Z"/><path d="M1877.600 121H1882.800M1877.600 124.300H1886.400"/><path d="M1883.400 124H1897Q1898.600 124 1898.600 125.600V133.400Q1898.600 135 1897 135H1895.400L1893 137.200L1890.600 135H1883.400Q1881.800 135 1881.800 133.400V125.600Q1881.800 124 1883.400 124Z"/><path d="M1885.400 127.600H1894.600M1885.600 130.800H1894.400"/></svg>
<div class="abs" style="left:30.900px;top:101px;width:20px;height:20px;border-radius:50%;background:#fff"></div>
<div class="abs" id="b1x" style="left:30.900px;top:102px;width:20px;text-align:center;color:#1a82e2;font-size:12px;font-weight:bold;line-height:15px">1</div>

<!-- handshake -->
<div class="circ" style="left:7px;top:156px;width:40px;height:40px"></div>
<svg class="abs" style="left:7px;top:156px" width="40" height="40" viewBox="1866 156 40 40" fill="none" stroke="#fff" stroke-width="2.100" stroke-linejoin="round" stroke-linecap="round"><path d="M1870 170H1875.900V181.600H1870ZM1896.700 171H1902.900V181.600H1896.700Z" fill="#fff" stroke="none"/><path d="M1875.500 170.800L1879.800 167.700H1885"/><path d="M1887.200 167.700H1892L1896.800 171.600"/><path d="M1887.600 168.200L1882.400 172.600Q1880.800 175 1883.200 176.700Q1885.600 177.800 1887.400 176L1890.200 173.200L1894.600 178.800"/><path d="M1875.500 180.600L1881.600 186.200Q1884.200 188.400 1887 186.600L1894.600 181.600L1896.800 181"/><circle cx="1872.500" cy="178.500" r=".8" fill="#1a82e2" stroke="none"/><circle cx="1899.500" cy="178.500" r=".8" fill="#1a82e2" stroke="none"/></svg>

<!-- online -->
<div class="abs" style="left:7px;top:829px;width:40px;height:40px;border-radius:50%;background:#fff;border:3px solid #f2f4fa"></div>
<div class="abs" id="o4" style="left:7px;top:841px;width:40px;text-align:center;font-size:17.500px;font-weight:bold;line-height:20px;color:#1a73e8">4</div>
<div class="abs" id="on" style="left:6px;top:870px;font-size:14px;line-height:18px;color:#1a73e8;white-space:nowrap">Online</div>

<!-- plus -->
<div class="abs" style="left:8px;top:897px;width:40px;height:40px;border-radius:50%;background:#00acc1;box-shadow:1px 2px 3px rgba(0,0,0,.3)"></div>
<svg class="abs" style="left:19px;top:908px" width="18" height="18" viewBox="0 0 18 18"><path d="M6.900 0h4.200v6.900H18v4.200h-6.900V18H6.900v-6.900H0V6.900h6.900z" fill="#fff"/></svg>

</div>
<div id="vscroll"><i></i></div>

</body>
</html>
